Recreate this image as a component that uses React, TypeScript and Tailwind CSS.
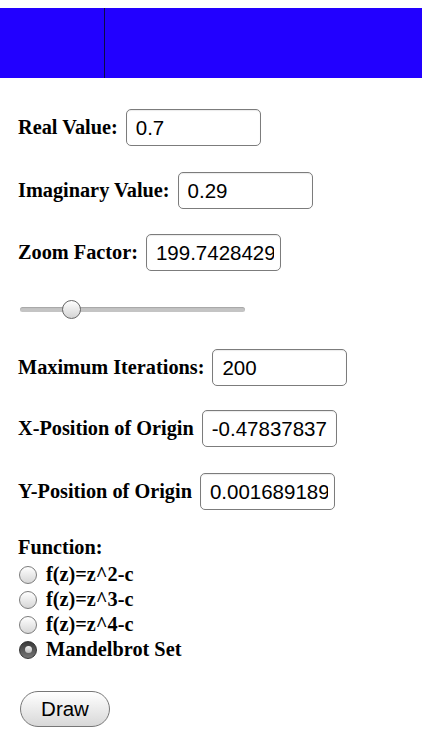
import { useState } from "react";

const serif = "font-['Liberation_Serif','Times_New_Roman',serif]";
const sans = "font-['Liberation_Sans',Arial,sans-serif]";

const Field = ({ label, value, className = "" }: { label: string; value: string; className?: string }) => (
  <div className={`flex h-[37px] items-center gap-[8px] ${className}`}>
    <span className={`${serif} text-[20.3px] font-bold text-black`}>{label}</span>
    <input
      defaultValue={value}
      className={`${sans} h-[37px] w-[135px] rounded-[5px] border border-[#7c7c7c] bg-white pl-[9px] pr-[6px] text-[20.5px] text-black outline-none shadow-[inset_0_1px_1px_rgba(0,0,0,0.08)]`}
    />
  </div>
);

const fns = ["f(z)=z^2-c", "f(z)=z^3-c", "f(z)=z^4-c", "Mandelbrot Set"];

export default function App() {
  const [fn, setFn] = useState(3);

  return (
    <div className="min-h-[750px] bg-white">
      <div className="mt-[8px] flex h-[70px] bg-[#2200ff]">
        <div className="w-[104px]" />
        <div className="w-[1px] bg-[#0c0c48]" />
      </div>

      <div className="px-[18px] pt-[31px]">
        <Field label="Real Value:" value="0.7" />
        <Field label="Imaginary Value:" value="0.29" className="mt-[26px]" />
        <Field label="Zoom Factor:" value="199.7428429" className="mt-[25px]" />

        {/* zoom slider */}
        <div className="relative ml-[2px] mt-[29px] flex h-[19px] w-[225px] items-center">
          <div className="h-[5px] w-full rounded-full bg-[#c4c4c4] shadow-[inset_0_1px_1px_rgba(0,0,0,0.15)]" />
          <div className="absolute left-[42px] top-0 h-[19px] w-[19px] rounded-full border border-[#666] bg-gradient-to-b from-white to-[#d4d4d4]" />
        </div>

        <Field label="Maximum Iterations:" value="200" className="mt-[30px]" />
        <Field label="X-Position of Origin" value="-0.47837837" className="mt-[24px]" />
        <Field label="Y-Position of Origin" value="0.001689189" className="mt-[26px]" />

        <div className={`${serif} mt-[25px] text-[20.3px] font-bold leading-[25px] text-black`}>Function:</div>
        <div className="mt-[2px]">
          {fns.map((f, i) => (
            <label key={f} className="flex h-[25px] cursor-pointer items-center gap-[9px] pl-[1px]" onClick={() => setFn(i)}>
              {fn === i ? (
                <span className="flex h-[18px] w-[18px] items-center justify-center rounded-full border border-[#333] bg-gradient-to-b from-[#3a3a3a] to-[#777]">
                  <span className="h-[7px] w-[7px] rounded-full bg-gradient-to-b from-[#f4f4f4] to-[#bbb]" />
                </span>
              ) : (
                <span className="h-[18px] w-[18px] rounded-full border border-[#7c7c7c] bg-gradient-to-b from-white to-[#d6d6d6]" />
              )}
              <span className={`${serif} text-[20.3px] font-bold leading-[25px] text-black`}>{f}</span>
            </label>
          ))}
        </div>

        <button
          type="button"
          className={`${sans} ml-[2px] mt-[29px] h-[36px] w-[90px] rounded-full border border-[#777] bg-gradient-to-b from-white to-[#d8d8d8] text-[20.5px] text-black`}
        >
          Draw
        </button>
      </div>
    </div>
  );
}
